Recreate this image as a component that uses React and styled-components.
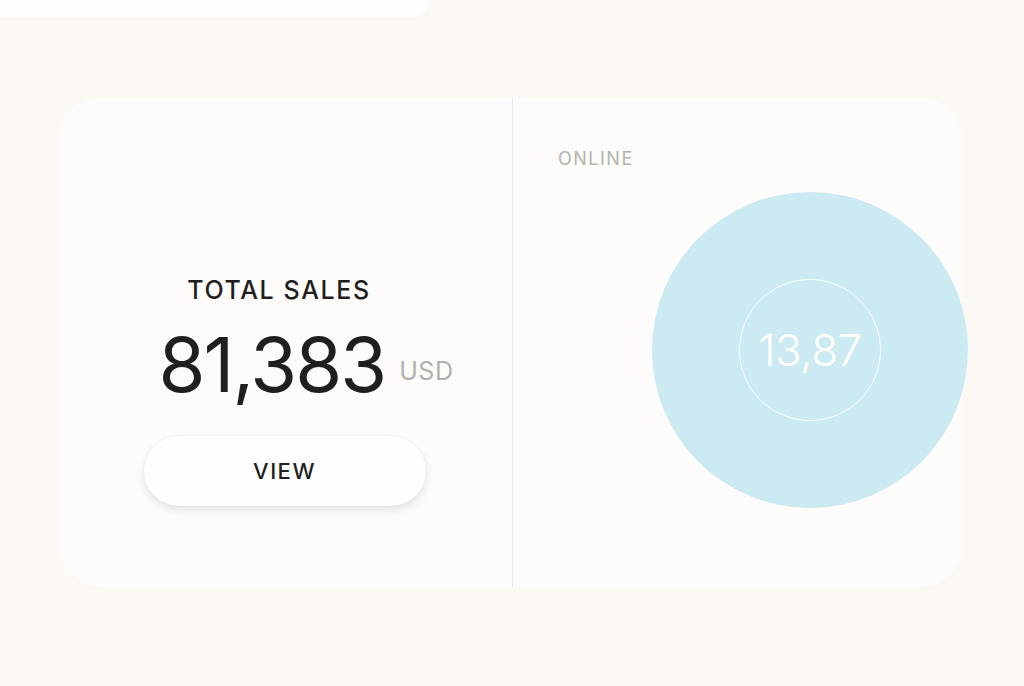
import React from "react";
import styled, { createGlobalStyle } from "styled-components";

const GlobalStyle = createGlobalStyle`
  html, body {
    margin: 0;
    padding: 0;
    background: #fcf9f5;
    font-family: Inter, "Noto Sans", sans-serif;
  }
`;

const Page = styled.div`
  width: 1024px;
  height: 686px;
  overflow: hidden;
  display: flex;
  flex-direction: column;
`;

const TopStrip = styled.div`
  width: 430px;
  height: 17px;
  background: #fefdfb;
  border-bottom-right-radius: 28px;
`;

const Card = styled.section`
  margin: 81px 0 0 60px;
  width: 902px;
  height: 489px;
  background: #fdfcfa;
  border-radius: 40px;
  display: grid;
  grid-template-columns: 452px 1px 1fr;
`;

const Divider = styled.div`
  background: #ece9e4;
`;

const SalesPanel = styled.div`
  display: flex;
  flex-direction: column;
  align-items: center;
  padding-top: 180px;
`;

const Label = styled.div`
  font-size: ${(p) => p.size}px;
  font-weight: ${(p) => p.weight || 400};
  letter-spacing: ${(p) => p.spacing}px;
  color: ${(p) => p.color};
  line-height: 1;
  margin-left: ${(p) => p.shift || 0}px;
`;

const AmountRow = styled.div`
  display: flex;
  align-items: flex-end;
  gap: 14px;
  margin-top: 23px;
  margin-left: 40px;
`;

const Amount = styled.span`
  font-size: 76px;
  font-weight: 400;
  color: #1f1f1f;
  letter-spacing: -2px;
  line-height: 1;
`;

const Currency = styled.span`
  font-size: 25px;
  line-height: 1;
  color: #b3b1ae;
  letter-spacing: 0.5px;
  margin-bottom: 18px;
`;

const ViewButton = styled.button`
  margin-top: 34px;
  margin-left: -3px;
  width: 282px;
  height: 70px;
  border: none;
  border-radius: 35px;
  background: #fefefe;
  box-shadow: 0 4px 10px rgba(0, 0, 0, 0.1), 0 0 2px rgba(0, 0, 0, 0.06);
  font-family: Inter, "Noto Sans", sans-serif;
  font-size: 22px;
  font-weight: 500;
  letter-spacing: 1.5px;
  color: #1f1f1f;
`;

const OnlinePanel = styled.div`
  display: flex;
  flex-direction: column;
  padding: 52px 0 0 45px;
`;

const Bubble = styled.div`
  margin: 24px 0 0 94px;
  width: 316px;
  height: 316px;
  border-radius: 50%;
  background: #cceaf1;
  display: flex;
  align-items: center;
  justify-content: center;
  flex-shrink: 0;
`;

const Ring = styled.div`
  width: 140px;
  height: 140px;
  border-radius: 50%;
  border: 1px solid rgba(255, 255, 255, 0.85);
  display: flex;
  align-items: center;
  justify-content: center;
  color: #ffffff;
  font-size: 44px;
  font-weight: 300;
  letter-spacing: -0.5px;
`;

export default function App() {
  return (
    <>
      <GlobalStyle />
      <Page>
        <TopStrip />
        <Card>
          <SalesPanel>
            <Label size={25} weight={500} spacing={1.6} color="#1f1f1f" shift={-14}>
              TOTAL SALES
            </Label>
            <AmountRow>
              <Amount>81,383</Amount>
              <Currency>USD</Currency>
            </AmountRow>
            <ViewButton>VIEW</ViewButton>
          </SalesPanel>
          <Divider />
          <OnlinePanel>
            <Label size={18} spacing={1.5} color="#b5b2ad">
              ONLINE
            </Label>
            <Bubble>
              <Ring>13,87</Ring>
            </Bubble>
          </OnlinePanel>
        </Card>
      </Page>
    </>
  );
}
